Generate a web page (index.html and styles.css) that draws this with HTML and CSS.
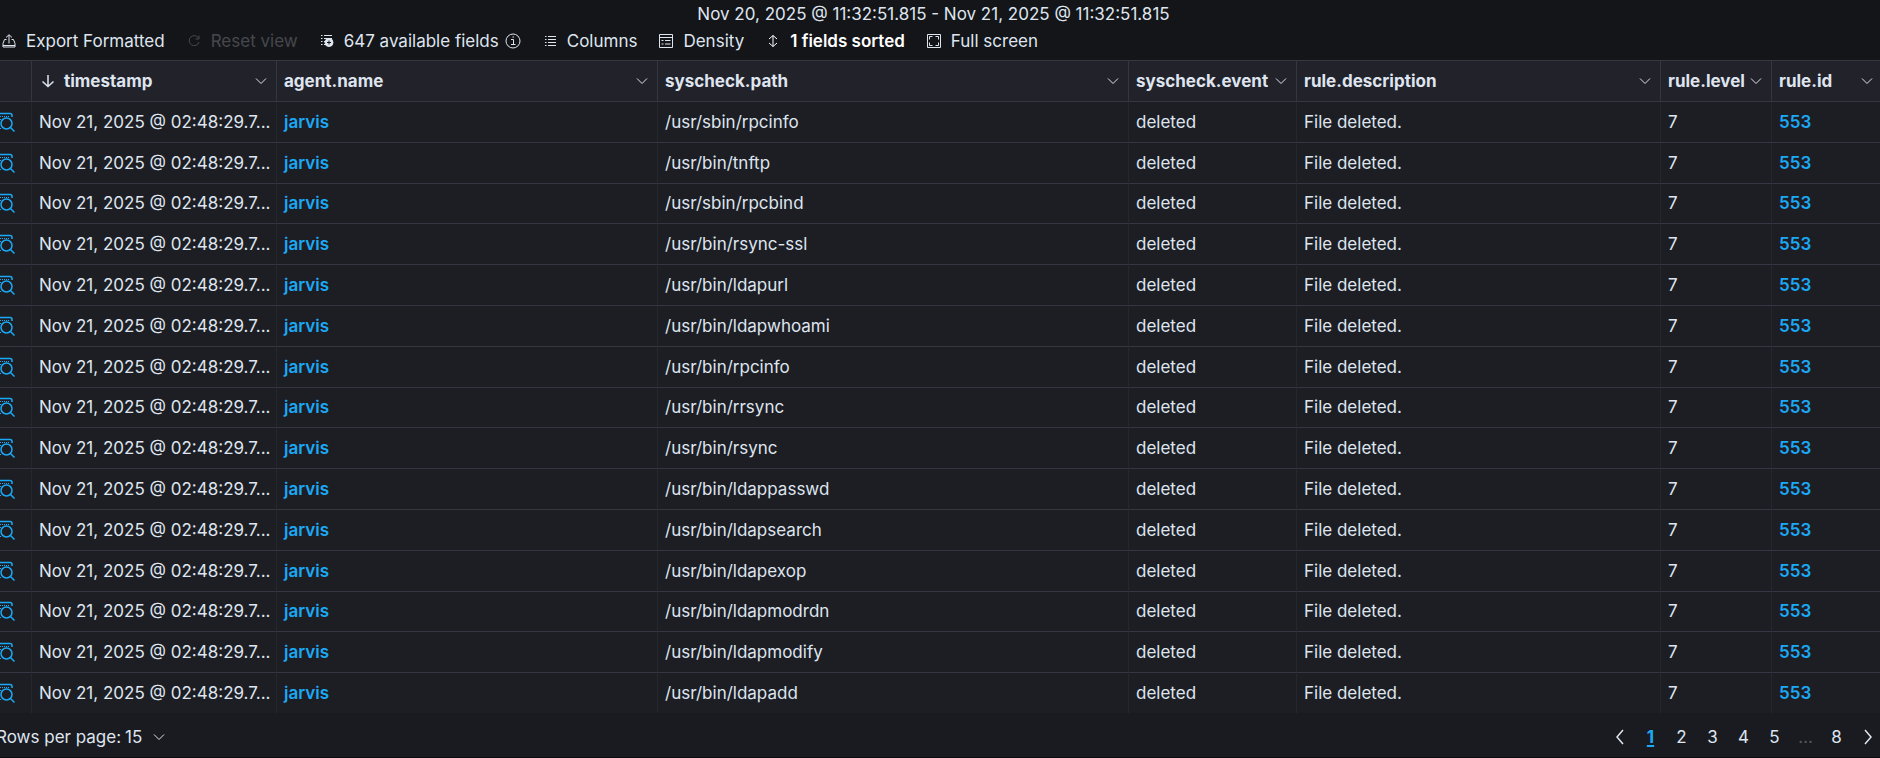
FILE: index.html
```
<!DOCTYPE html>
<html lang="en">
<head>
    <meta charset="UTF-8">
    <meta name="viewport" content="width=device-width, initial-scale=1.0">
    <title>Events</title>
    <link rel="stylesheet" href="styles.css">
</head>
<body>
    <svg class="sprite" aria-hidden="true">
        <symbol id="chevron" viewBox="0 0 12 12"><path d="M1 3.5l5 5 5-5"/></symbol>
        <symbol id="inspect" viewBox="0 0 20 20">
            <path d="M1 17V3.500A2 2 0 0 1 3 1.500H15A2 2 0 0 1 17 3.500V5" stroke-width="1.500"/>
            <path d="M3 4.500h12M3 7.500h3M3 10.500h2M3 13.500h2M3 16.500h4" stroke-dasharray="1 1"/>
            <circle cx="11.500" cy="11.500" r="5.500" stroke-width="1.500"/>
            <path d="M15.500 15.500l4 4" stroke-width="1.500"/>
        </symbol>
    </svg>

    <main class="events">
        <div class="time-range">Nov 20, 2025 @ 11:32:51.815 - Nov 21, 2025 @ 11:32:51.815</div>

        <div class="toolbar">
            <button type="button">
                <svg class="icon" viewBox="0 0 14 14"><path d="M4.500 5.500H2.500L1 9.500v3.500h12V9.500L11.500 5.500H9.500M7 9.500V1M4 3.500L7 .7l3 2.800M1 11.500h12"/></svg>
                Export Formatted
            </button>
            <button type="button" disabled>
                <svg class="icon" viewBox="0 0 14 14"><path d="M12 1.500V5H8.500M11.700 4.500A5 5 0 1 0 12 8"/></svg>
                Reset view
            </button>
            <button type="button">
                <svg class="icon" viewBox="0 0 14 14">
                    <path d="M1 1.500h1.500M1 4.500h1.500M1 7.500h1.500M1 10.500h1.500M4 1.500h8M4 4.500h8M4 7.500h2M4 10.500h2"/>
                    <circle class="solid" cx="9" cy="8.500" r="4"/>
                    <path class="cut" d="M9 6.500v4M7 8.500h4"/>
                </svg>
                647 available fields
                <svg class="icon-info" viewBox="0 0 16 16"><circle cx="8" cy="8" r="7"/><path d="M6 6.500h2.500V11.500M6 11.500h4.500M7.500 4h1.500"/></svg>
            </button>
            <button type="button">
                <svg class="icon" viewBox="0 0 14 14"><path d="M2 2.500h1.500M2 5.500h1.500M2 8.500h1.500M2 11.500h1.500M5 2.500h8M5 5.500h8M5 8.500h8M5 11.500h8"/></svg>
                Columns
            </button>
            <button type="button">
                <svg class="icon" viewBox="0 0 14 14"><path d="M.5.5h13v13H.5zM.5 3.500h13M2.500 6.500h2M6 6.500h5.500M2.500 10h2M6 10h5.500"/></svg>
                Density
            </button>
            <button type="button" class="active">
                <svg class="icon" viewBox="0 0 14 14"><path d="M7 1.500v11M3 5l4-3.500L11 5M3 9l4 3.500L11 9"/></svg>
                1 fields sorted
            </button>
            <button type="button">
                <svg class="icon" viewBox="0 0 14 14"><path d="M.5.5h13v13H.5zM2.500 5.500v-3h3M8.500 2.500h3v3M11.500 8.500v3h-3M5.500 11.500h-3v-3"/></svg>
                Full screen
            </button>
        </div>

        <div class="grid">
            <table>
                <colgroup>
                    <col class="col-action">
                    <col class="col-time">
                    <col class="col-agent">
                    <col>
                    <col class="col-event">
                    <col class="col-desc">
                    <col class="col-level">
                    <col class="col-id">
                </colgroup>
                <thead>
                    <tr>
                        <th></th>
                        <th><button type="button"><svg class="sort" viewBox="0 0 14 14"><path d="M7 1v12M1.500 7.500L7 12.500l5.500-5"/></svg><span>timestamp</span><svg class="chevron"><use href="#chevron"/></svg></button></th>
                        <th><button type="button"><span>agent.name</span><svg class="chevron"><use href="#chevron"/></svg></button></th>
                        <th><button type="button"><span>syscheck.path</span><svg class="chevron"><use href="#chevron"/></svg></button></th>
                        <th><button type="button"><span>syscheck.event</span><svg class="chevron"><use href="#chevron"/></svg></button></th>
                        <th><button type="button"><span>rule.description</span><svg class="chevron"><use href="#chevron"/></svg></button></th>
                        <th><button type="button"><span>rule.level</span><svg class="chevron"><use href="#chevron"/></svg></button></th>
                        <th><button type="button"><span>rule.id</span><svg class="chevron"><use href="#chevron"/></svg></button></th>
                    </tr>
                </thead>
                <tbody id="rows"></tbody>
            </table>
        </div>

        <div class="footer">
            <div class="page-size">
                <label for="pageSize">Rows per page:</label>
                <select id="pageSize">
                    <option>15</option>
                </select>
                <svg class="chevron"><use href="#chevron"/></svg>
            </div>
            <nav class="pagination" aria-label="Pages">
                <button type="button" aria-label="Previous page"><svg viewBox="0 0 8 16"><path d="M7 1L1 8l6 7"/></svg></button>
                <button type="button" class="current">1</button>
                <button type="button">2</button>
                <button type="button">3</button>
                <button type="button">4</button>
                <button type="button">5</button>
                <span>…</span>
                <button type="button">8</button>
                <button type="button" aria-label="Next page"><svg viewBox="0 0 8 16"><path d="M1 1l6 7-6 7"/></svg></button>
            </nav>
        </div>
    </main>

    <script src="script.js"></script>
</body>
</html>
```

FILE: styles.css
```
* {
    box-sizing: border-box;
}

body {
    margin: 0;
    background-color: #141519;
    color: #dfe5ef;
    font-family: Inter, "Liberation Sans", sans-serif;
    font-size: 17px;
    line-height: 24px;
    overflow: hidden;
}

button,
select {
    margin: 0;
    padding: 0;
    border: none;
    background: none;
    color: inherit;
    font: inherit;
    cursor: pointer;
}

svg {
    flex: none;
    fill: none;
    stroke: currentColor;
}

.sprite {
    position: absolute;
    width: 0;
    height: 0;
}

/* the panel runs slightly past both sides of the window */
.events {
    display: flex;
    flex-direction: column;
    height: 100vh;
    margin: 0 -3px 0 -12px;
    border-bottom: 1px solid #0b0c0f;
}

.time-range {
    padding: 2px 4px 2px 0;
    text-align: center;
}

.toolbar {
    display: flex;
    gap: 22px;
    padding: 1px 14px 7px;
}

.toolbar button {
    display: flex;
    align-items: center;
    gap: 10px;
    white-space: nowrap;
}

.toolbar button:disabled {
    color: #46484d;
    cursor: default;
}

.toolbar .active {
    color: #fff;
    font-weight: 600;
}

.icon {
    width: 14px;
    height: 14px;
}

.icon-info {
    width: 16px;
    height: 16px;
    margin-left: -4px;
}

.solid {
    fill: currentColor;
}

.cut {
    stroke: #141519;
}

.grid {
    flex: 1;
    min-height: 0;
}

table {
    width: 100%;
    height: 100%;
    table-layout: fixed;
    border-collapse: separate;
    border-spacing: 0;
    background-color: #1d1e24;
}

.col-action { width: 44px; }
.col-time { width: 245px; }
.col-agent { width: 381px; }
.col-event { width: 168px; }
.col-desc { width: 364px; }
.col-level { width: 111px; }
.col-id { width: 111px; }

th {
    height: 42px;
    padding: 0 9px 0 7px;
    background-color: #22222b;
    border: 1px solid #343741;
    border-left: none;
}

th button {
    display: flex;
    align-items: center;
    width: 100%;
    font-weight: 700;
}

th span {
    flex: 1;
    text-align: left;
}

.sort {
    width: 14px;
    height: 14px;
    margin: 0 9px 0 2px;
    stroke-width: 1.5;
}

.chevron {
    width: 12px;
    height: 12px;
}

td {
    padding: 7px;
    border-right: 1px solid #25272e;
    border-bottom: 1px solid #343741;
    white-space: nowrap;
}

tr:last-child td {
    border-bottom: none;
}

td button {
    display: block;
    color: #1ba9f5;
}

td button svg {
    display: block;
    width: 20px;
    height: 20px;
}

td a {
    color: #1ba9f5;
    font-weight: 600;
    text-decoration: none;
}

.footer {
    display: flex;
    align-items: center;
    justify-content: space-between;
    height: 44px;
    padding: 4px 0 0 8px;
    background-color: #1a1b20;
}

.page-size {
    display: flex;
    align-items: center;
    gap: 4px;
    position: relative;
}

.page-size select {
    appearance: none;
    padding-right: 26px;
}

.page-size option {
    background-color: #1a1b20;
}

/* arrow drawn over the select's right end */
.page-size .chevron {
    position: absolute;
    right: 4px;
    pointer-events: none;
}

.pagination {
    display: flex;
}

.pagination button,
.pagination span {
    display: flex;
    align-items: center;
    justify-content: center;
    width: 31px;
    height: 24px;
}

.pagination span {
    color: #53565e;
}

.pagination svg {
    width: 8px;
    height: 16px;
    stroke-width: 1.5;
}

.pagination .current {
    color: #1ba9f5;
    font-weight: 700;
    text-decoration: underline;
    text-decoration-thickness: 2px;
    text-underline-offset: 2px;
}
```

FILE: script.js
```
const paths = [
    "/usr/sbin/rpcinfo",
    "/usr/bin/tnftp",
    "/usr/sbin/rpcbind",
    "/usr/bin/rsync-ssl",
    "/usr/bin/ldapurl",
    "/usr/bin/ldapwhoami",
    "/usr/bin/rpcinfo",
    "/usr/bin/rrsync",
    "/usr/bin/rsync",
    "/usr/bin/ldappasswd",
    "/usr/bin/ldapsearch",
    "/usr/bin/ldapexop",
    "/usr/bin/ldapmodrdn",
    "/usr/bin/ldapmodify",
    "/usr/bin/ldapadd"
];

const rows = document.getElementById("rows");

paths.forEach(function (path) {
    const row = document.createElement("tr");
    row.innerHTML = `
        <td><button type="button" aria-label="Inspect"><svg><use href="#inspect"/></svg></button></td>
        <td>Nov 21, 2025 @ 02:48:29.7...</td>
        <td><a href="#">jarvis</a></td>
        <td>${path}</td>
        <td>deleted</td>
        <td>File deleted.</td>
        <td>7</td>
        <td><a href="#">553</a></td>
    `;
    rows.appendChild(row);
});
```
